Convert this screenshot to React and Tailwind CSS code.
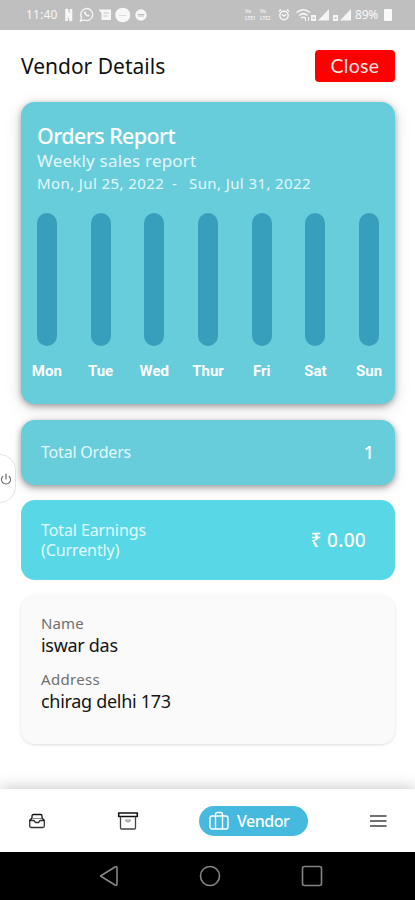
import { Power } from "lucide-react";

const days = ["Mon", "Tue", "Wed", "Thur", "Fri", "Sat", "Sun"];

function Signal() {
  return (
    <svg width="18" height="14" viewBox="0 0 18 14" fill="#f5f5f5">
      <path d="M18 1v11.500H7z" />
      <path d="M0 7h5v6H0z" />
      <path d="M1.500 9h2v2h-2z" fill="#c9c9c9" />
    </svg>
  );
}

function NetworkRate({ label }) {
  return (
    <div className="w-[13px] text-[5px] leading-[7px] font-bold tracking-[-0.2px] text-[#ededed]">
      <div>Vo</div>
      <div>{label}</div>
    </div>
  );
}

function StatusBar() {
  return (
    <div className="flex h-[30px] shrink-0 items-center bg-[#bfbfbf] pl-[26px] text-[12px] text-[#f7f7f7]">
      <span className="w-[38px] tracking-[0.2px]">11:40</span>
      <svg width="86" height="16" viewBox="0 0 86 16" fill="none" stroke="#f7f7f7">
        <path d="M2.500 14V2L7 14V2" strokeWidth="2.600" />
        <path d="M16.500 14l1-3.600a6 6 0 1 1 2.600 2.500z" strokeWidth="1.300" />
        <path d="M20.200 5c-.9 1.500 2.200 5.200 4.800 4.600l.6-1.300-1.500-.9-.8.7-1.500-1.600.6-.8-.8-1.500z" fill="#f7f7f7" stroke="none" />
        <path d="M34.500 2.500H47v10.500H37.500V6z" fill="#f7f7f7" stroke="none" />
        <path d="M39.500 6h5.500M39.500 9h4" stroke="#c4c4c4" />
        <ellipse cx="58.700" cy="8" rx="7.500" ry="7.300" fill="#f7f7f7" stroke="none" />
        <path d="M55 8.500h7.500" stroke="#dcdcdc" />
        <circle cx="77" cy="8" r="5.700" fill="#f7f7f7" stroke="none" />
        <path d="M73.500 7.500h7M74 9h6" stroke="#bdbdbd" />
      </svg>
      <div className="ml-[95px] flex h-[14px] items-center gap-[2px]">
        <NetworkRate label="LTE1" />
        <NetworkRate label="LTE2" />
      </div>
      <svg className="ml-[5px]" width="12" height="14" viewBox="0 0 12 14" fill="none" stroke="#f7f7f7" strokeWidth="1.500">
        <circle cx="6" cy="7.500" r="4.200" />
        <path d="M1 3.500l2-2M11 3.500l-2-2M4 6.500l2 1.500 2-1.500" />
      </svg>
      <svg className="ml-[6px]" width="15" height="14" viewBox="0 0 15 14" fill="none" stroke="#f7f7f7" strokeWidth="1.500">
        <path d="M.5 4.500q7-5.500 13.500 0M3 7.500q4.500-3.700 8.500 0M5 10.200q2.300-2 4.500 0" />
        <path d="M9.500 10v3M12.500 9v4" strokeWidth="1" />
      </svg>
      <div className="flex gap-[4px]">
        <Signal />
        <Signal />
      </div>
      <span className="ml-[4px] w-[29px] tracking-[-0.2px]">89%</span>
      <span className="h-[12px] w-[8px] rounded-[1px] bg-[#fafafa]" />
    </div>
  );
}

function OrdersReport() {
  return (
    <section className="h-[302px] shrink-0 rounded-[14px] bg-[#68cdda] pt-[21px] text-white shadow-[0_2px_6px_#0005,0_4px_18px_#0002]">
      <h2 className="pl-4 text-[21.5px] leading-[26px] font-medium tracking-[-0.6px] text-white">Orders Report</h2>
      <p className="pl-4 text-[17px] leading-[23px] tracking-[0.2px] text-[#e2f7fa]">Weekly sales report</p>
      <p className="flex pl-4 text-[15px] leading-[22px] tracking-[0.4px] text-[#e2f7fa]">
        <span className="w-[135px]">Mon, Jul 25, 2022</span>
        <span className="w-[17px]">-</span>
        <span>Sun, Jul 31, 2022</span>
      </p>
      <div className="mx-[-1px] mt-[19px] grid grid-cols-7">
        {days.map((day) => (
          <div key={day} className="flex flex-col items-center">
            <div className="h-[133px] w-[20px] rounded-full bg-[#379ebc]" />
            <span className="mt-[15px] font-[Roboto] text-[15px] leading-5 font-bold">{day}</span>
          </div>
        ))}
      </div>
    </section>
  );
}

function BottomNav() {
  return (
    <nav className="flex h-[63px] shrink-0 items-center bg-white pl-[28px] shadow-[0_-2px_14px_#0003]">
      <svg width="18" height="18" viewBox="0 0 18 18" fill="none" stroke="#333" strokeWidth="1.300" strokeLinejoin="round">
        <path d="M1.700 8.500h4.300l1.500 2h3l1.500-2h4.300V14q0 1.500-1.500 1.500H3.200q-1.500 0-1.500-1.500z" />
        <path d="M1.700 8.500L4 6V4q0-1.500 1.500-1.500h7Q14 2.500 14 4v2l2.300 2.500" stroke="#111" />
        <path d="M4 6.500h10" stroke="#888" strokeWidth="1" />
      </svg>
      <svg className="ml-[71px]" width="22" height="20" viewBox="0 0 22 20" fill="none" stroke="#222" strokeWidth="1.300" strokeLinejoin="round">
        <path d="M1.700 2h18.600v3.500H1.700z" stroke="#111" strokeWidth="1.600" />
        <path d="M3.500 5.500v11.500q0 1 1 1h13q1 0 1-1V5.500" stroke="#444" />
        <path d="M8.500 9h5q-.5 2-2.500 2t-2.500-2" stroke="#888" strokeWidth="1" />
      </svg>
      <div className="ml-[60px] flex h-[30px] w-[109px] items-center rounded-full bg-[#46b9df] pl-[10px] text-white">
        <svg width="20" height="20" viewBox="0 0 20 20" fill="none" stroke="currentColor" strokeWidth="1.400">
          <rect x="1" y="5" width="18" height="13" rx="2.200" />
          <path d="M6.500 18V3.500q0-2 2-2h3q2 0 2 2V18" />
        </svg>
        <span className="ml-[8px] text-[16px] font-medium tracking-[-0.5px]">Vendor</span>
      </div>
      <svg className="ml-[62px]" width="17" height="14" viewBox="0 0 17 14" stroke="#707070" strokeWidth="2">
        <path d="M0 2h16.500M0 7h16.500M0 12h16.500" />
      </svg>
    </nav>
  );
}

function SystemNav() {
  return (
    <div className="flex h-[48px] shrink-0 items-center bg-black pl-[98px]">
      <svg width="22" height="22" viewBox="0 0 22 22" fill="none" stroke="#858585" strokeWidth="1.600" strokeLinejoin="round">
        <path d="M2.500 11L17 2q2-1 2 1v16q0 2-2 1z" />
      </svg>
      <svg className="ml-[79px]" width="22" height="22" viewBox="0 0 22 22" fill="none" stroke="#858585" strokeWidth="1.600">
        <circle cx="11" cy="11" r="9.500" />
      </svg>
      <svg className="ml-[80px]" width="22" height="22" viewBox="0 0 22 22" fill="none" stroke="#858585" strokeWidth="1.600">
        <rect x="1.500" y="1.500" width="19" height="19" rx="2" />
      </svg>
    </div>
  );
}

export default function App() {
  return (
    <div className="relative flex h-[900px] w-[415px] flex-col overflow-hidden bg-white font-['Noto_Sans',sans-serif]">
      <StatusBar />
      <header className="flex h-[72px] shrink-0 items-center justify-between pr-5 pl-[21px]">
        <h1 className="pt-[2px] text-[21px] text-[#111]">Vendor Details</h1>
        <button className="h-8 w-[80px] rounded-[4px] bg-[#ff0000] font-[Lato] text-[19.5px] leading-8 tracking-[0.3px] text-[#ffe5e5]">Close</button>
      </header>
      <main className="flex flex-1 flex-col pr-5 pl-[21px]">
        <OrdersReport />
        <section className="mt-4 flex h-[65px] shrink-0 items-center justify-between rounded-[14px] bg-[#68cdda] pr-[21px] pb-px pl-5 shadow-[0_2px_6px_#0005,0_4px_12px_#0002]">
          <span className="text-[16px] tracking-[-0.2px] text-[#e2f7fa]">Total Orders</span>
          <span className="text-[18px] font-medium text-white">1</span>
        </section>
        <section className="mt-[15px] flex h-[80px] shrink-0 items-center justify-between rounded-[14px] bg-[#58d8e6] pr-[29px] pl-5">
          <span className="text-[16px] leading-5 tracking-[-0.1px] text-[#e2fafd]">
            Total Earnings
            <br />
            (Currently)
          </span>
          <span className="text-[19px] font-medium tracking-[0.3px] text-white">₹ 0.00</span>
        </section>
        <section className="mt-[15px] h-[149px] shrink-0 rounded-[14px] bg-[#fafafa] pt-[17px] pl-5 shadow-[0_1px_3px_#0002]">
          <p className="text-[15px] leading-[22px] tracking-[0.1px] text-[#707070]">Name</p>
          <p className="text-[18px] leading-[22px] tracking-[-0.3px] text-[#151515]">iswar das</p>
          <p className="mt-[12px] text-[15px] leading-[22px] tracking-[0.3px] text-[#707070]">Address</p>
          <p className="text-[18px] leading-[22px] tracking-[-0.3px] text-[#151515]">chirag delhi 173</p>
        </section>
      </main>
      <BottomNav />
      <SystemNav />
      <div className="absolute top-[454px] -left-[17px] flex h-[49px] w-[33px] items-center justify-end rounded-[16px] border border-[#e3e3e3] bg-white pr-[3px]">
        <Power size={12} color="#666" strokeWidth={2.4} />
      </div>
    </div>
  );
}
